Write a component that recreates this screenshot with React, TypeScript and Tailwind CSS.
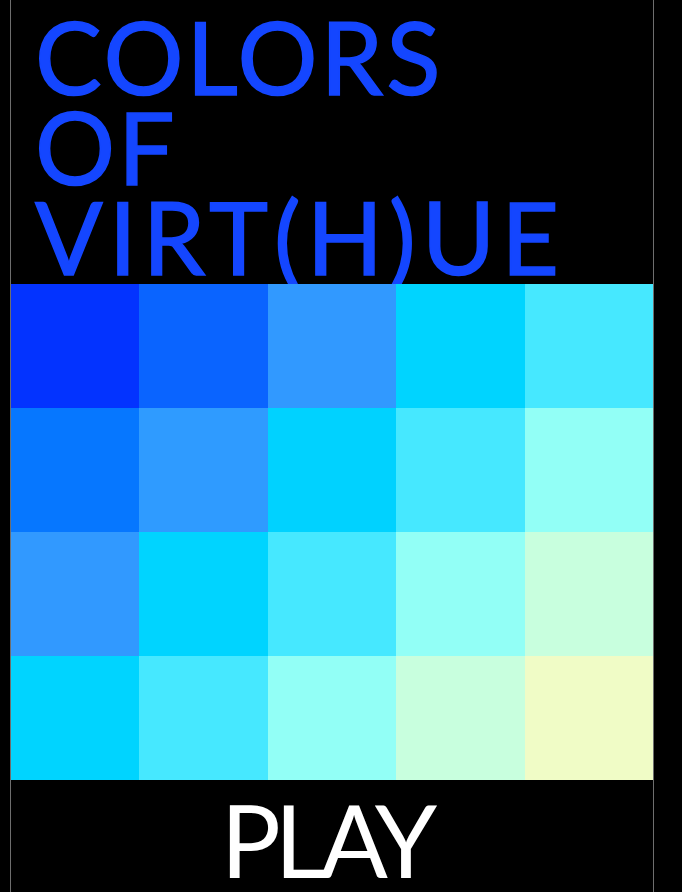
const rows: string[][] = [
  ["#0333ff", "#0a64ff", "#3199ff", "#00d4ff", "#46e8ff"],
  ["#0677ff", "#2f9bff", "#00d2ff", "#46e8ff", "#92fff6"],
  ["#3199ff", "#00d4ff", "#46e8ff", "#92fff6", "#c8ffde"],
  ["#00d4ff", "#46e8ff", "#92fff6", "#c8ffde", "#f0fcc6"],
];

const App = () => {
  return (
    <div className="w-full h-[892px] bg-black overflow-hidden flex">
      <div className="ml-[10px] w-[644px] h-full flex flex-col border-x border-[#6e6e6e] bg-black">
        {/* title */}
        <div className="h-[284px] pl-[24px] pt-[11px] font-['Lato',sans-serif] text-[100px] leading-[90px] text-[#1446ff] [-webkit-text-stroke:1.5px_#1446ff]">
          <div className="tracking-[3px]">COLORS</div>
          <div className="tracking-[3px]">OF</div>
          <div className="tracking-[6px]">VIRT(H)UE</div>
        </div>

        {/* swatch grid */}
        <div className="flex flex-col">
          {rows.map((row, i) => (
            <div key={i} className="grid grid-cols-5 h-[124px]">
              {row.map((c, j) => (
                <div key={j} style={{ backgroundColor: c }} />
              ))}
            </div>
          ))}
        </div>

        <div className="flex-1 flex justify-center pt-[6px] pr-[12px]">
          <button className="font-['Lato',sans-serif] text-[100px] leading-[90px] tracking-[-6px] text-white">
            PLAY
          </button>
        </div>
      </div>
    </div>
  );
};

export default App;
